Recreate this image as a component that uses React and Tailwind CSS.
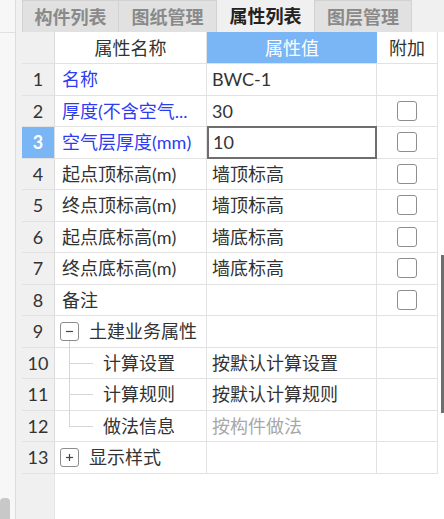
import React from "react";

const rows = [
  { n: "1", name: "名称", blue: true, value: "BWC-1" },
  { n: "2", name: "厚度(不含空气...", blue: true, value: "30", check: true },
  { n: "3", name: "空气层厚度(mm)", blue: true, value: "10", check: true, selected: true },
  { n: "4", name: "起点顶标高(m)", value: "墙顶标高", check: true },
  { n: "5", name: "终点顶标高(m)", value: "墙顶标高", check: true },
  { n: "6", name: "起点底标高(m)", value: "墙底标高", check: true },
  { n: "7", name: "终点底标高(m)", value: "墙底标高", check: true },
  { n: "8", name: "备注", value: "", check: true },
  { n: "9", name: "土建业务属性", group: "minus" },
  { n: "10", name: "计算设置", value: "按默认计算设置", child: "mid" },
  { n: "11", name: "计算规则", value: "按默认计算规则", child: "mid" },
  { n: "12", name: "做法信息", value: "按构件做法", child: "last", grey: true },
  { n: "13", name: "显示样式", group: "plus" },
];

function Box({ sign }) {
  return (
    <div className="w-[19px] h-[19px] border border-[#8c8c8c] rounded-[3px] flex items-center justify-center bg-white shrink-0">
      <svg width="9" height="9" viewBox="0 0 9 9">
        <path d="M1 4.5h7" stroke="#444" strokeWidth="1.2" />
        {sign === "plus" && <path d="M4.5 1v7" stroke="#444" strokeWidth="1.2" />}
      </svg>
    </div>
  );
}

export default function App() {
  return (
    <div
      className="w-[444px] h-[519px] flex bg-[#f0f0f0] overflow-hidden text-[18px] leading-none text-[#333]"
      style={{ fontFamily: '"Lato", "Noto Sans CJK SC", sans-serif' }}
    >
      <div className="w-[16px] shrink-0 bg-[#f7f7f7] border-r border-[#dcdcdc] flex flex-col">
        <div className="h-[33px] border-b border-[#e0e0e0]" />
        <div className="flex-1" />
        <div className="h-[21px] w-[10px] rounded-t-[4px] bg-[#c8c8c8]" />
      </div>
      <div className="w-[6px] shrink-0" />
      <div className="flex-1 flex flex-col min-w-0">
        <div className="h-[32px] flex shrink-0">
          <div className="w-[97px] bg-[#e1e1e1] border border-[#d2d2d2] border-b-0 flex items-center justify-center text-[#8a8a8a] font-semibold">构件列表</div>
          <div className="w-[98px] bg-[#e1e1e1] border-t border-r border-[#d2d2d2] flex items-center justify-center text-[#8a8a8a] font-semibold">图纸管理</div>
          <div className="w-[97px] bg-[#f0f0f0] flex items-center justify-center text-[#222] font-bold">属性列表</div>
          <div className="w-[98px] bg-[#e1e1e1] border border-[#d2d2d2] border-b-0 flex items-center justify-center text-[#8a8a8a] font-semibold">图层管理</div>
          <div className="flex-1" />
        </div>
        <div className="flex-1 flex min-h-0">
          <div className="w-[416px] flex flex-col bg-white">
            <div className="h-[32px] flex shrink-0 border-b border-[#e2e2e2]">
              <div className="w-[33px] bg-[#f0f0f0] border-r border-[#dcdcdc]" />
              <div className="w-[152px] flex items-center justify-center border-r border-[#e2e2e2]">属性名称</div>
              <div className="w-[170px] bg-[#7ab5f5] text-white flex items-center justify-center">属性值</div>
              <div className="w-[61px] flex items-center justify-center border-r border-[#e2e2e2]">附加</div>
            </div>
            {rows.map((r) => (
              <div key={r.n} className="h-[31.5px] flex shrink-0 border-b border-[#e2e2e2]">
                <div
                  className={
                    r.selected
                      ? "w-[33px] bg-[#7ab5f5] text-white font-bold border-r border-[#dcdcdc] flex items-center justify-center"
                      : "w-[33px] bg-[#f0f0f0] border-r border-[#dcdcdc] flex items-center justify-center"
                  }
                >
                  {r.n}
                </div>
                <div className="w-[152px] border-r border-[#e2e2e2] relative flex items-center">
                  {r.group ? (
                    <div className="flex items-center pl-[5px] gap-[10px]">
                      <Box sign={r.group} />
                      <span>{r.name}</span>
                    </div>
                  ) : r.child ? (
                    <>
                      <div
                        className={
                          r.child === "last"
                            ? "absolute left-[14px] top-0 h-[16px] w-px bg-[#d6d6d6]"
                            : "absolute left-[14px] top-0 bottom-[-1px] w-px bg-[#d6d6d6]"
                        }
                      />
                      <div className="absolute left-[14px] top-[15px] w-[24px] h-px bg-[#d6d6d6]" />
                      <span className="pl-[48px] whitespace-nowrap">{r.name}</span>
                    </>
                  ) : (
                    <span className={r.blue ? "pl-[7px] text-[#2d3cf2] whitespace-nowrap" : "pl-[7px] whitespace-nowrap"}>
                      {r.name}
                    </span>
                  )}
                  {r.group === "minus" && (
                    <div className="absolute left-[14px] top-[25px] bottom-[-1px] w-px bg-[#d6d6d6]" />
                  )}
                </div>
                <div
                  className={
                    r.selected
                      ? "w-[170px] border-2 border-[#6e6e6e] flex items-center pl-[4px] -mt-px h-[32.5px]"
                      : "w-[170px] border-r border-[#e2e2e2] flex items-center pl-[5px]"
                  }
                >
                  <span className={r.grey ? "text-[#a8a8a8] whitespace-nowrap" : "whitespace-nowrap"}>{r.value}</span>
                </div>
                <div className="w-[61px] border-r border-[#e2e2e2] flex items-center justify-center">
                  {r.check && <div className="w-[20px] h-[20px] border border-[#8e8e8e] rounded-[3px] bg-white" />}
                </div>
              </div>
            ))}
            <div className="flex-1 flex">
              <div className="w-[33px] bg-[#f0f0f0] border-r border-[#e6e6e6]" />
              <div className="flex-1 bg-white" />
            </div>
          </div>
          <div className="flex-1 bg-white flex justify-end">
            <div className="w-[3px] mt-[223px] h-[158px] bg-[#6e6e6e]" />
          </div>
        </div>
      </div>
    </div>
  );
}
